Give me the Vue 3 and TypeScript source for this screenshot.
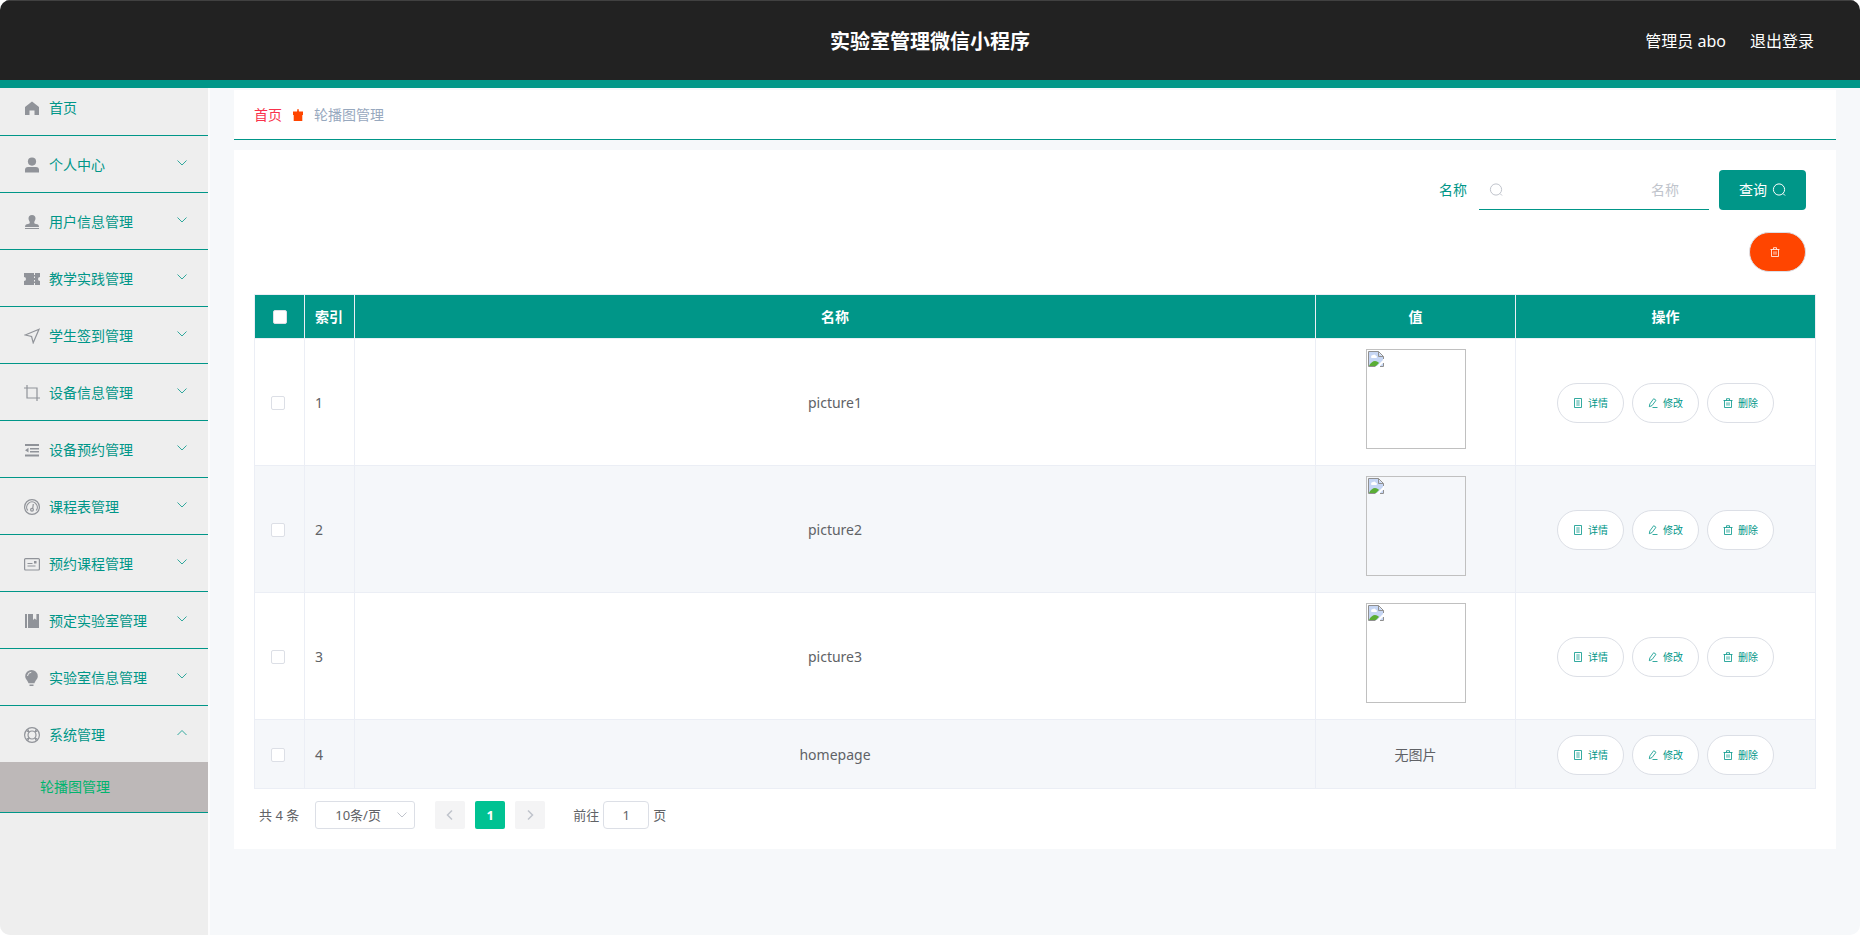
<script setup lang="ts">
import { ref } from 'vue'

interface MenuItem {
  label: string
  icon: string
}

const menus: MenuItem[] = [
  { label: '个人中心', icon: 'user' },
  { label: '用户信息管理', icon: 'stamp' },
  { label: '教学实践管理', icon: 'ticket' },
  { label: '学生签到管理', icon: 'nav' },
  { label: '设备信息管理', icon: 'crop' },
  { label: '设备预约管理', icon: 'fold' },
  { label: '课程表管理', icon: 'gauge' },
  { label: '预约课程管理', icon: 'card' },
  { label: '预定实验室管理', icon: 'book' },
  { label: '实验室信息管理', icon: 'bulb' },
]

interface Row {
  id: number
  name: string
  picture: boolean
}

const rows: Row[] = [
  { id: 1, name: 'picture1', picture: true },
  { id: 2, name: 'picture2', picture: true },
  { id: 3, name: 'picture3', picture: true },
  { id: 4, name: 'homepage', picture: false },
]

const keyword = ref('')
const page = ref('1')
</script>

<template>
  <div class="app">
    <header class="topbar">
      <h1>实验室管理微信小程序</h1>
      <div class="account">
        <span>管理员 abo</span>
        <a href="#">退出登录</a>
      </div>
    </header>

    <div class="body">
      <nav class="side">
        <a class="item home" href="#">
          <svg class="mi" viewBox="0 0 16 16"><path d="M8 1.5 15 7v8h-4.500v-4.500h-5V15H1V7z" /></svg>
          <span>首页</span>
        </a>
        <a v-for="m in menus" :key="m.label" class="item" href="#">
          <svg class="mi" viewBox="0 0 16 16">
            <template v-if="m.icon === 'user'">
              <circle cx="8" cy="4.600" r="4.100" />
              <path d="M1 15.500v-2.500a3 3 0 0 1 3-3h8a3 3 0 0 1 3 3v2.500z" />
            </template>
            <template v-else-if="m.icon === 'stamp'">
              <path d="M8 1a3.500 3.500 0 0 1 3.500 3.500c0 1.500-1 2.500-1.200 3.500-.2 1.300.2 2 1.700 2 2 0 3 1 3 3H1c0-2 1-3 3-3 1.500 0 1.900-.7 1.700-2C5.500 7 4.500 6 4.500 4.500A3.500 3.500 0 0 1 8 1zM1 14h14v1H1z" />
            </template>
            <path v-else-if="m.icon === 'ticket'" fill-rule="evenodd" d="M0 2h10v2h1V2h5v4a2 2 0 0 0 0 4v4h-5v-2h-1v2H0v-4a2 2 0 0 0 0-4zM10 5.500v1.500h1V5.500zM10 9v1.500h1V9z" />
            <path v-else-if="m.icon === 'nav'" class="ln" d="M1.200 7 15 1.300 9.200 14.800 7.600 8.500z" />
            <path v-else-if="m.icon === 'crop'" class="ln" d="M3 0v13h13M0 3h13v13" />
            <template v-else-if="m.icon === 'fold'">
              <path d="M1 2h14v2H1zM6 6h9v1.500H6zM6 9h9v1.500H6zM1 12.500h14v2H1zM1 8.200 4.500 5.800v4.800z" />
            </template>
            <template v-else-if="m.icon === 'gauge'">
              <circle class="ln" cx="8" cy="8" r="7.400" />
              <path class="ln" d="M3.800 11.500A5.300 5.300 0 1 1 12.200 11.500M9.300 5 8.700 9.500" />
              <circle class="ln" cx="8" cy="10.800" r="1.400" />
            </template>
            <template v-else-if="m.icon === 'card'">
              <rect class="ln" x=".6" y="2.600" width="14.800" height="11.400" rx="1" />
              <path class="ln" d="M3.500 7.500h5M3.500 10h8" />
              <path d="M10 5h2.500v2.500H10z" />
            </template>
            <path v-else-if="m.icon === 'book'" d="M1 1h2v14H1zM4 1h5v6l1.700-1.500L12.400 7V1H15v14H4z" />
            <template v-else-if="m.icon === 'bulb'">
              <path d="M7.500 0a6.300 6.300 0 0 1 6.300 6.300c0 3-2.600 4.200-3.300 7h-6c-.7-2.800-3.300-4-3.300-7A6.300 6.300 0 0 1 7.500 0zM5.500 14.500h4V16h-4z" />
              <path class="shine" d="M3.500 6A4 4 0 0 1 7.300 2.300" />
            </template>
          </svg>
          <span>{{ m.label }}</span>
          <svg class="arrow" viewBox="0 0 12 12"><path d="M1.500 3.500 6 8l4.500-4.500" /></svg>
        </a>
        <div class="group">
          <a class="item open" href="#">
            <svg class="mi" viewBox="0 0 16 16">
              <circle class="ln" cx="8" cy="8" r="7.400" />
              <circle class="ln" cx="8" cy="8" r="4" />
              <path class="ln" d="M2.500 3.800 5.200 5.200M3.800 2.500 5.200 5.200M13.500 3.800 10.800 5.200M12.200 2.500 10.800 5.200M2.500 12.200 5.200 10.800M3.800 13.500 5.200 10.800M13.500 12.200 10.800 10.800M12.200 13.500 10.800 10.800" />
            </svg>
            <span>系统管理</span>
            <svg class="arrow" viewBox="0 0 12 12"><path d="M1.500 8 6 3.500 10.500 8" /></svg>
          </a>
          <a class="sub" href="#">轮播图管理</a>
        </div>
      </nav>

      <main class="main">
        <div class="crumbs">
          <a href="#">首页</a>
          <svg viewBox="0 0 12 12"><path d="M1 2.500h4L5.500 0h1L7 2.500h4V6h-.7v6H1.700V6H1z" /></svg>
          <span>轮播图管理</span>
        </div>

        <section class="card">
          <form class="search" @submit.prevent>
            <label for="kw">名称</label>
            <div class="field">
              <svg class="lens" viewBox="0 0 14 14"><circle cx="7" cy="6.500" r="5.600" /><path d="m11 10.500 2 2" /></svg>
              <input id="kw" v-model="keyword" type="text" placeholder="名称" />
            </div>
            <button class="query" type="submit">
              <span>查询</span>
              <svg class="lens" viewBox="0 0 14 14"><circle cx="7" cy="6.500" r="5.600" /><path d="m11 10.500 2 2" /></svg>
            </button>
          </form>
          <div class="bulk">
            <button type="button" aria-label="删除">
              <svg class="bi" viewBox="0 0 10 10"><path d="M.5 2.500h9M3.500 2.300V.7h3v1.600M1.500 2.500v7h7v-7M4 4.300v3.400M6 4.300v3.400" /></svg>
            </button>
          </div>

          <table>
            <colgroup>
              <col class="c-check" /><col class="c-index" /><col /><col class="c-value" /><col class="c-ops" />
            </colgroup>
            <thead>
              <tr>
                <th><input type="checkbox" aria-label="全选" /></th>
                <th class="left">索引</th>
                <th>名称</th>
                <th>值</th>
                <th>操作</th>
              </tr>
            </thead>
            <tbody>
              <tr v-for="r in rows" :key="r.id">
                <td class="left"><input type="checkbox" :aria-label="r.name" /></td>
                <td class="left">{{ r.id }}</td>
                <td>{{ r.name }}</td>
                <td>
                  <div v-if="r.picture" class="picture">
                    <svg viewBox="0 0 16 16">
                      <path fill="#c6d6f4" d="M1 1h9l5 5v9H1z" />
                      <path fill="#fff" d="M3 6a2 2 0 0 1 2-2 2 2 0 0 1 3 1 1 1 0 0 1 0 2H4a1 1 0 0 1-1-1z" />
                      <path fill="#5aad35" d="M1 15c1-3 4-5 6-5 2 0 3 1 4 2l-3 3z" />
                      <path fill="#fff" d="m8 16 8-8v3l-5 5z" />
                      <path fill="none" stroke="#909090" d="M7.500 15.500h-7V.5h10l5 5V8M15.500 12v3.500H12M10.500.5v5h5" />
                    </svg>
                  </div>
                  <template v-else>无图片</template>
                </td>
                <td>
                  <div class="ops">
                    <button type="button">
                      <svg class="bi" viewBox="0 0 10 10"><path d="M1.500.5h7v9h-7zM3.300 3h3.400M3.300 5h3.400M3.300 7h3.400" /></svg>
                      <span>详情</span>
                    </button>
                    <button type="button">
                      <svg class="bi" viewBox="0 0 10 10"><path d="M1.300 8.700 1.800 6 5.700.7 8 2.300 4 7.600zM4.500 9.500h5" /></svg>
                      <span>修改</span>
                    </button>
                    <button type="button">
                      <svg class="bi" viewBox="0 0 10 10"><path d="M.5 2.500h9M3.500 2.300V.7h3v1.600M1.500 2.500v7h7v-7M4 4.300v3.400M6 4.300v3.400" /></svg>
                      <span>删除</span>
                    </button>
                  </div>
                </td>
              </tr>
            </tbody>
          </table>

          <div class="pager">
            <span class="total">共 4 条</span>
            <div class="size">
              <select aria-label="每页条数"><option>10条/页</option></select>
              <svg viewBox="0 0 12 12"><path d="M1.500 3.500 6 8l4.500-4.500" /></svg>
            </div>
            <div class="pages">
              <button type="button" disabled aria-label="上一页"><svg viewBox="0 0 12 12"><path d="M8 1.500 3.500 6 8 10.500" /></svg></button>
              <button type="button" class="on">1</button>
              <button type="button" disabled aria-label="下一页"><svg viewBox="0 0 12 12"><path d="M4 1.500 8.500 6 4 10.500" /></svg></button>
            </div>
            <label class="jump">前往<input v-model="page" type="text" />页</label>
          </div>
        </section>
      </main>
    </div>
  </div>
</template>

<style>
body {
  background: #fff;
}
</style>

<style scoped>
* {
  box-sizing: border-box;
}
.app {
  display: flex;
  flex-direction: column;
  min-height: 100vh;
  border-radius: 10px;
  overflow: hidden;
  background: #f6f8fa;
  font: 14px/20px "Noto Sans", "Noto Sans CJK SC", sans-serif;
  color: #606266;
}
a {
  text-decoration: none;
  color: inherit;
}
button,
input,
select {
  font: inherit;
  color: inherit;
  margin: 0;
}
.topbar {
  display: grid;
  grid-template-columns: 1fr auto 1fr;
  align-items: center;
  height: 88px;
  padding: 0 46px;
  background: #222;
  border-top: 1px solid #414141;
  border-bottom: 8px solid #009688;
  color: #fff;
}
.topbar h1 {
  grid-column: 2;
  margin: 0;
  padding-top: 2px;
  font-size: 20px;
  line-height: 28px;
  font-weight: 700;
}
.account {
  display: flex;
  justify-content: flex-end;
  gap: 24px;
  font-size: 16px;
}
.body {
  flex: 1;
  display: flex;
}
.side {
  flex: none;
  width: 210px;
  background: #eee;
  border-right: 2px solid #fcfcfd;
  color: #009688;
}
.item {
  display: flex;
  align-items: center;
  height: 57px;
  padding: 2px 20px 0 24px;
  border-bottom: 1px solid #009688;
}
.item.home {
  height: 48px;
  padding-top: 0;
  padding-bottom: 8px;
}
.item.open {
  height: 56px;
  border-bottom: 0;
}
.item span {
  flex: 1;
  margin-left: 9px;
}
.mi {
  width: 16px;
  height: 16px;
  fill: #909399;
}
.ln {
  fill: none;
  stroke: #909399;
  stroke-width: 1.200;
}
.shine {
  fill: none;
  stroke: #eee;
}
.arrow {
  width: 12px;
  height: 12px;
  margin-bottom: 4px;
  fill: none;
  stroke: #009688;
  stroke-width: 0.800;
}
.group {
  border-bottom: 1px solid #009688;
}
.sub {
  display: block;
  padding-left: 40px;
  line-height: 50px;
  background: #bdb8b8;
  color: #00b46e;
}
.main {
  flex: 1;
  min-width: 0;
  padding: 2px 24px 24px;
}
.crumbs {
  display: flex;
  align-items: center;
  gap: 10px;
  height: 50px;
  padding: 0 20px;
  background: #fff;
  border-bottom: 1px solid #009688;
  color: #97a8be;
}
.crumbs a {
  color: #f9324c;
}
.crumbs svg {
  width: 12px;
  height: 12px;
  fill: #ff4500;
}
.card {
  margin-top: 10px;
  padding: 20px;
  background: #fff;
}
.search {
  display: flex;
  justify-content: flex-end;
  align-items: center;
  gap: 10px;
  padding-right: 10px;
}
.search label {
  color: #009688;
}
.field {
  display: flex;
  align-items: center;
  width: 230px;
  height: 40px;
  margin-left: 2px;
  padding: 0 30px 0 10px;
  border-bottom: 1px solid #009688;
}
.field input {
  flex: 1;
  min-width: 0;
  border: 0;
  padding: 0;
  background: none;
  outline: none;
  text-align: right;
}
.field input::placeholder {
  color: #c0c4cc;
}
.lens {
  width: 14px;
  height: 14px;
  fill: none;
  stroke: #c0c4cc;
}
.query {
  display: flex;
  align-items: center;
  gap: 5px;
  height: 40px;
  padding: 0 20px;
  border: 0;
  border-radius: 4px;
  background: #009688;
  color: #fff;
}
.query .lens {
  stroke: #fff;
}
.bulk {
  display: flex;
  justify-content: flex-end;
  padding: 22px 10px;
}
.bulk button {
  width: 57px;
  height: 40px;
  padding: 0 6px 2px 0;
  border: 1px solid #dcdfe6;
  border-radius: 20px;
  background: #ff4500;
  color: #fff;
}
.bi {
  width: 10px;
  height: 10px;
  fill: none;
  stroke: currentColor;
  stroke-width: 0.800;
  vertical-align: middle;
}
table {
  width: 100%;
  table-layout: fixed;
  border-collapse: collapse;
}
.c-check,
.c-index {
  width: 50px;
}
.c-value {
  width: 200px;
}
.c-ops {
  width: 300px;
}
th,
td {
  padding: 0 10px;
  border: 1px solid #ebeef5;
  text-align: center;
}
th {
  height: 44px;
  background: #009688;
  color: #fff;
  font-weight: 700;
}
td {
  height: 69px;
  padding-top: 1px;
}
.left {
  text-align: left;
}
th input,
td input {
  appearance: none;
  display: block;
  width: 14px;
  height: 14px;
  border: 1px solid #dcdfe6;
  border-radius: 2px;
  background: #fff;
}
th input {
  margin: 0 auto;
}
td.left input {
  margin-left: 6px;
}
tbody tr:nth-child(even) {
  background: #f5f7fa;
}
.picture {
  width: 100px;
  height: 100px;
  margin: 9px auto 16px;
  padding: 1px;
  border: 1px solid #c0c0c0;
}
.picture svg {
  display: block;
  width: 16px;
  height: 16px;
}
.ops {
  display: flex;
  justify-content: center;
  gap: 8px;
}
.ops button {
  display: flex;
  align-items: center;
  justify-content: center;
  gap: 5px;
  width: 67px;
  height: 40px;
  padding: 0;
  border: 1px solid #dcdfe6;
  border-radius: 20px;
  background: #fff;
  color: #009688;
  font-size: 10px;
}
.pager {
  display: flex;
  align-items: center;
  margin-top: 12px;
  padding: 0 5px;
  font-size: 13px;
}
.size {
  display: flex;
  align-items: center;
  width: 100px;
  height: 28px;
  margin-left: 16px;
  padding-right: 6px;
  border: 1px solid #dcdfe6;
  border-radius: 3px;
}
.size select {
  flex: 1;
  min-width: 0;
  appearance: none;
  padding: 0 0 0 19px;
  border: 0;
  background: none;
}
.pager svg {
  width: 12px;
  height: 12px;
  fill: none;
  stroke: #c0c4cc;
}
.pages {
  display: flex;
  gap: 10px;
  margin: 0 28px 0 20px;
}
.pages button {
  display: flex;
  align-items: center;
  justify-content: center;
  width: 30px;
  height: 28px;
  padding: 0;
  border: 0;
  border-radius: 2px;
  background: #f4f4f5;
  font-weight: 700;
}
.pages svg {
  stroke-width: 1.500;
}
.pages .on {
  background: #00c292;
  color: #fff;
}
.jump {
  display: flex;
  align-items: center;
  gap: 4px;
}
.jump input {
  width: 46px;
  height: 28px;
  padding: 0;
  border: 1px solid #dcdfe6;
  border-radius: 4px;
  text-align: center;
}
</style>
